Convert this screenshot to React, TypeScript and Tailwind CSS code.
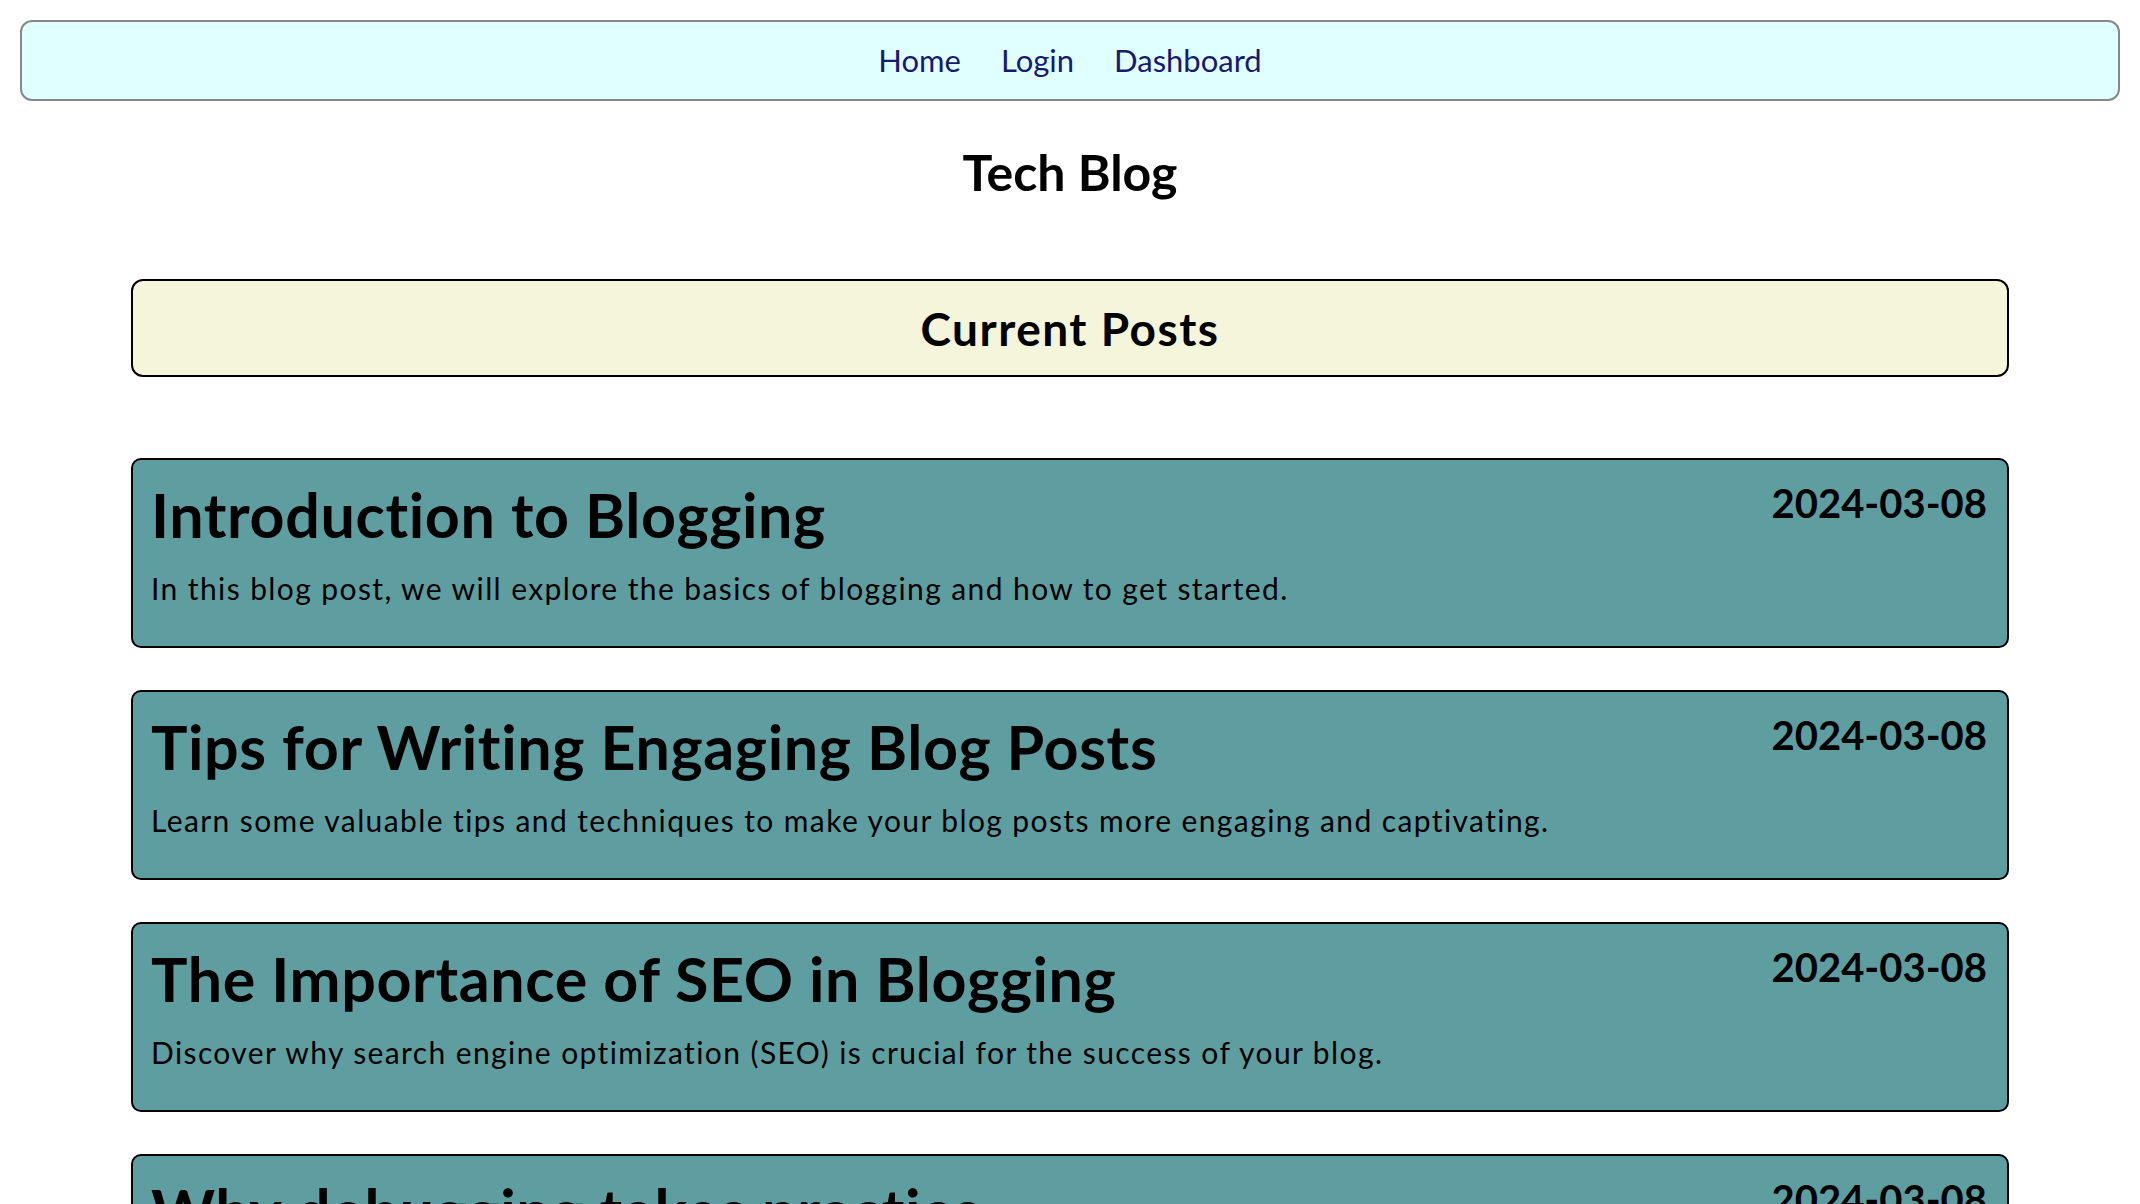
const posts = [
  {
    title: "Introduction to Blogging",
    date: "2024-03-08",
    body: "In this blog post, we will explore the basics of blogging and how to get started.",
  },
  {
    title: "Tips for Writing Engaging Blog Posts",
    date: "2024-03-08",
    body: "Learn some valuable tips and techniques to make your blog posts more engaging and captivating.",
  },
  {
    title: "The Importance of SEO in Blogging",
    date: "2024-03-08",
    body: "Discover why search engine optimization (SEO) is crucial for the success of your blog.",
  },
  {
    title: "Why debugging takes practice",
    date: "2024-03-08",
    body: "Debugging is a skill that improves with time, patience and a lot of trial and error.",
  },
]

function PostCard({ title, date, body }: { title: string; date: string; body: string }) {
  return (
    <article className="h-[190px] rounded-[10px] border-2 border-black bg-[#5f9ea0] pl-[18px] pr-[20px] pt-[19px]">
      <div className="flex items-start justify-between">
        <h2 className="text-[61px] font-bold leading-[72px] tracking-[0.6px] text-black">{title}</h2>
        <span className="text-[40px] font-bold leading-[48px] text-black">{date}</span>
      </div>
      <p className="mt-[19px] text-[30px] leading-[36px] tracking-[1.4px] text-black">{body}</p>
    </article>
  )
}

export default function App() {
  return (
    <div className="min-h-screen bg-white pt-5 font-['Trebuchet_MS',Lato,'DejaVu_Sans',sans-serif] text-black">
      <nav className="mx-5 flex h-[81px] items-center justify-center gap-[40px] rounded-[12px] border-2 border-[#888888] bg-[#e0ffff] text-[31px] text-[#191970]">
        <a href="#">Home</a>
        <a href="#">Login</a>
        <a href="#">Dashboard</a>
      </nav>

      <h1 className="mt-[42px] text-center text-[50px] font-bold leading-[58px]">Tech Blog</h1>

      <main className="mx-[131px] mt-[78px]">
        <section className="flex h-[98px] items-center justify-center rounded-[12px] border-2 border-black bg-[#f5f5dc]">
          <h2 className="text-[46px] font-bold tracking-[1.5px]">Current Posts</h2>
        </section>

        <div className="mt-[81px] flex flex-col gap-[42px] pb-10">
          {posts.map((post) => (
            <PostCard key={post.title} {...post} />
          ))}
        </div>
      </main>
    </div>
  )
}
